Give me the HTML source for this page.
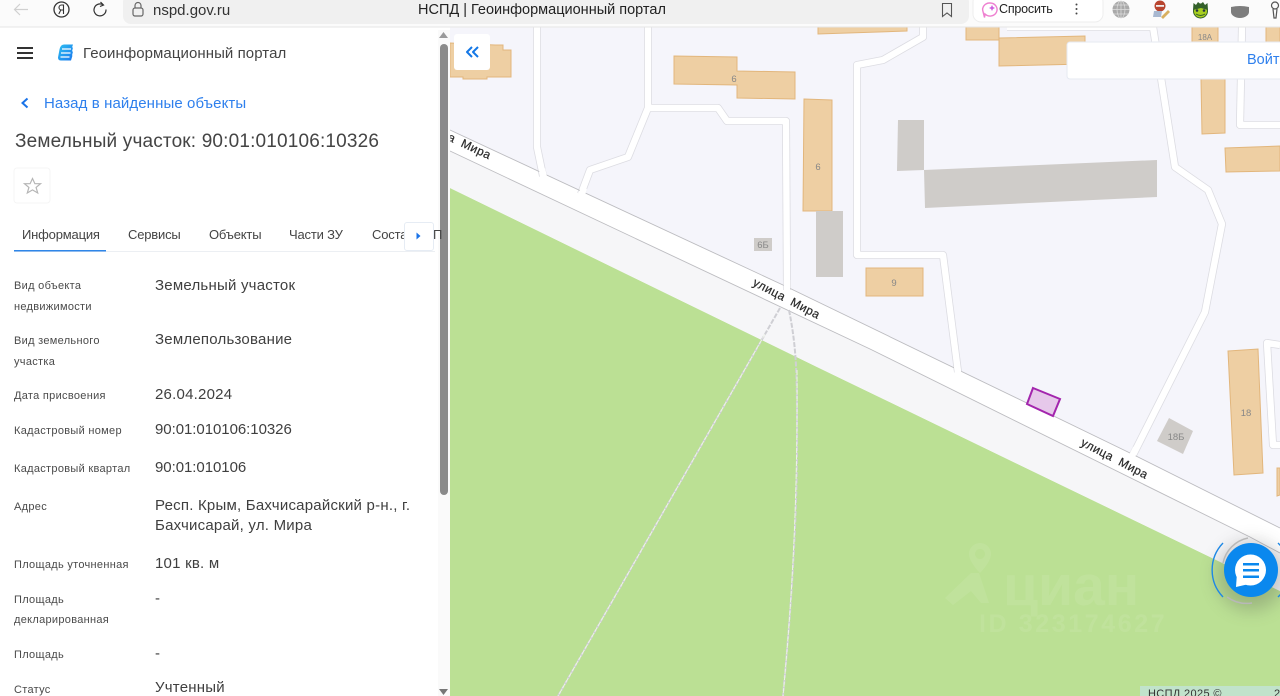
<!DOCTYPE html>
<html lang="ru"><head><meta charset="utf-8"><title>НСПД | Геоинформационный портал</title>
<style>
html,body{margin:0;padding:0;width:1280px;height:696px;overflow:hidden;background:#f5f5fb;font-family:"Liberation Sans","Noto Sans CJK SC",sans-serif}
.t{position:absolute;white-space:nowrap;line-height:1}
.l{font-size:11px;color:#4a4a4a;left:14px;letter-spacing:.3px}
.v{font-size:15px;color:#3f3f3f;left:155px;letter-spacing:.22px}
.n{letter-spacing:-.05px}
.tab{font-size:13px;color:#444;top:227.500px;letter-spacing:-.18px}
svg{position:absolute;left:0;top:0}
</style></head><body>
<svg width="1280" height="696" viewBox="0 0 1280 696" font-family="'Liberation Sans',sans-serif">
<defs>
<filter id="b" x="-50%" y="-50%" width="200%" height="200%"><feGaussianBlur stdDeviation="9"/></filter>
<linearGradient id="g" x1="0" y1="0" x2="1" y2="1"><stop offset="0" stop-color="#2fc0f0"/><stop offset="1" stop-color="#1a78ee"/></linearGradient>
</defs>
<rect width="1280" height="696" fill="#f5f5fb"/>
<polygon points="450,188 817,367 1210,557 1280,591 1280,696 450,696" fill="#bbe094"/>
<polygon points="450,151 870,349 1250,537 1280,553 1280,591 1210,557 817,367 450,188" fill="#f6f6f8"/>
<polygon points="450,130 783,285 1130,453 1280,528 1280,553 1250,537 870,349 450,151" fill="#fff"/>
<g fill="none" stroke-linejoin="round">
<g stroke="#dcdce2" stroke-width="8">
<path d="M537,27V147L543,176M648,27V108L628,157L590,170L581,194M648,108H718L727,121H786L787,290M923,27V37L883,60L857,65V255H943L958,372M1153,27L1175,167L1208,190L1222,224L1205,312L1133,455M1242,27L1240,125H1280M1280,345L1267,343L1273,445H1280M1007,27H1153"/>
</g>
<g stroke="#fff" stroke-width="6.400">
<path d="M537,27V147L543,176M648,27V108L628,157L590,170L581,194M648,108H718L727,121H786L787,290M923,27V37L883,60L857,65V255H943L958,372M1153,27L1175,167L1208,190L1222,224L1205,312L1133,455M1242,27L1240,125H1280M1280,345L1267,343L1273,445H1280M1007,27H1153"/>
</g>
</g>
<polyline points="450,130 783,285 1130,453 1280,528" fill="none" stroke="#bcbcc0" stroke-width=".9"/>
<polyline points="450,151 870,349 1250,537 1280,553" fill="none" stroke="#bcbcc0" stroke-width=".9"/>
<path d="M542,169L544,178M584,188L581,197M787,280V293M957,366L959,378M1136,448L1131,458" stroke="#fff" stroke-width="6.400" fill="none"/>
<g fill="#eecfa3" stroke="#e2b67c" stroke-width="1">
<polygon points="450,43 495,45 503,45 503,50 511,50 511,77 487,77 487,79 463,79 463,77 450,77"/>
<polygon points="674,56 737,57 737,71 795,72 795,99 737,98 737,85 674,84"/>
<polygon points="804,99 832,100 832,211 803,211"/>
<polygon points="866,268 923,268 923,296 866,296"/>
<polygon points="818,27 907,27 907,31 818,34"/>
<polygon points="966,27 999,27 999,40 966,40"/>
<polygon points="999,38 1085,36 1085,64 999,66"/>
<polygon points="1192,27 1218,27 1218,42 1192,42"/>
<polygon points="1201,79 1225,79 1225,133 1202,134"/>
<polygon points="1225,148 1280,146 1280,171 1226,172"/>
<polygon points="1266,27 1280,27 1280,42 1266,42"/>
<polygon points="1228,351 1258,349 1263,473 1234,475"/>
<polygon points="1277,468 1280,468 1280,495 1277,496"/>
</g>
<g fill="#cfccc9">
<polygon points="816,211 843,211 843,277 816,277"/>
<polygon points="898,120 924,120 924,170 897,171"/>
<polygon points="924,170 1157,160 1157,197 925,208"/>
<polygon points="1169,418 1193,431 1183,454 1157,441"/>
<polygon points="754,238 772,238 772,251 754,251"/>
</g>
<polygon points="1033,388 1060,399 1053,416 1027,404" fill="#e6c8ea" stroke="#a325ad" stroke-width="2"/>
<g font-size="9.500" fill="#888" text-anchor="middle">
<text x="734" y="82">6</text><text x="818" y="170">6</text><text x="894" y="286">9</text><text x="763" y="248">6Б</text><text x="1205" y="40" font-size="8">18А</text><text x="1246" y="416">18</text><text x="1176" y="440">18Б</text>
</g>
<path d="M780,308L558,696" stroke="#cfcfd4" stroke-width="2" fill="none" stroke-dasharray="5 1.500"/>
<path d="M789,310C796,345 797,370 797,420C798,520 790,620 783,696" stroke="#cfcfd4" stroke-width="2" fill="none" stroke-dasharray="5 1.500"/>
<path d="M765,334L558,696" stroke="#eef2ea" stroke-width="1" fill="none" stroke-dasharray="5 1.500"/>
<path d="M797,370C798,520 790,620 783,696" stroke="#eef2ea" stroke-width="1" fill="none" stroke-dasharray="5 1.500"/>
<g font-size="12" fill="#2a2a2a" stroke="#2a2a2a" stroke-width=".2" letter-spacing=".38">
<text transform="translate(752,285) rotate(27.500)" xml:space="preserve">улица  Мира</text>
<text transform="translate(1080,445) rotate(27.500)" xml:space="preserve">улица  Мира</text>
<text transform="translate(447,140) rotate(25)" xml:space="preserve">а  Мира</text>
</g>
<g fill="#fff" opacity=".075">
<path fill-rule="evenodd" d="M980,543a11,11 0 0 1 11,11c0,8-11,19-11,19s-11-11-11-19a11,11 0 0 1 11-11zm0,6a5,5 0 1 0 .01,0z"/>
<path d="M971,573h8l10,30h-8l-10-12l-18,14l-8-7z"/>
<text x="1003" y="605" font-size="57" font-weight="700">циан</text>
<text x="979" y="632" font-size="25" font-weight="700" letter-spacing="2.600">ID 323174627</text>
</g>
<circle cx="1251" cy="576" r="34" fill="#444" opacity=".28" filter="url(#b)"/>
<path d="M1223,543A39,39 0 0 0 1223,597M1278,543L1281,546M1278,597L1281,594" fill="none" stroke="#1e88e5" stroke-width="1.400"/>
<path d="M1223,563A32,32 0 0 1 1248,538M1227,597A34,34 0 0 0 1252,603" fill="none" stroke="#b8b8b8" stroke-width="1.500"/>
<circle cx="1251" cy="570" r="27" fill="#0a88ee"/>
<circle cx="1250.500" cy="570" r="15.500" fill="#fff"/>
<path d="M1236,587l1-14l12,11z" fill="#fff"/>
<g fill="#0a88ee"><rect x="1243" y="563" width="16" height="2.500"/><rect x="1243" y="569" width="16" height="2.500"/><rect x="1243" y="575.500" width="16" height="2.500"/></g>
<rect x="1140" y="686" width="140" height="10" fill="#c1e3cb"/>
<text x="1148" y="697" font-size="11" fill="#333" letter-spacing=".35">НСПД 2025 ©</text>
<text x="1274" y="697" font-size="11" fill="#333">2</text>
<rect x="1067" y="42" width="220" height="37" rx="3" fill="#fff" stroke="#e6eaf2"/>
<text x="1247" y="64" font-size="14.500" fill="#2f80ed">Войт</text>
<rect x="454" y="34" width="36" height="36" rx="3" fill="#fff"/>
<path d="M472,47l-5,5l5,5M478,47l-5,5l5,5" fill="none" stroke="#1477e6" stroke-width="2" stroke-linejoin="round"/>
<rect x="0" y="27" width="450" height="669" fill="#fff"/>
<rect x="438" y="30" width="12" height="666" fill="#fafafa"/>
<rect x="440" y="44" width="8" height="451" rx="4" fill="#8a8a8a"/>
<polygon points="443.500,32 439,38 448,38" fill="#9a9a9a"/>
<polygon points="443.500,695 439,689 448,689" fill="#777"/>
<rect x="0" y="0" width="1280" height="27" fill="#fbfbfb"/>
<rect x="0" y="26.500" width="1280" height="1" fill="#e6e6e6"/>
<rect x="123" y="-6" width="846" height="30" rx="8" fill="#f0f0f0"/>
<rect x="973" y="-6" width="130" height="28" rx="8" fill="#fff" stroke="#eee"/>
<path d="M28,9.500H15M20,4l-5.500,5.500l5.500,5.500" fill="none" stroke="#d0d0d0" stroke-width="1.200"/>
<circle cx="61.500" cy="9.500" r="7.500" fill="none" stroke="#333" stroke-width="1.300"/>
<path d="M63.500,14V5h-2a2.400,2.400 0 0 0 0,5h2M60.800,10l-2,4" fill="none" stroke="#333" stroke-width="1.100"/>
<path d="M106,9.500a6,6 0 1 1-2.500-4.500M100.500,2l3,3-3.500,1.500" fill="none" stroke="#333" stroke-width="1.200"/>
<rect x="133" y="8" width="10" height="8" rx="2" fill="none" stroke="#666" stroke-width="1.200"/>
<path d="M135,8V5.500a3,3 0 0 1 6,0V8" fill="none" stroke="#666" stroke-width="1.200"/>
<path d="M942.500,3.500h9v13l-4.500-3.500l-4.500,3.500z" fill="none" stroke="#555" stroke-width="1.100"/>
<path d="M990,3a7,6.500 0 1 1-5,11l-.5,3.500l-1.500-6a7,6.500 0 0 1 7-8.500z" fill="none" stroke="#ee80d0" stroke-width="1.400"/>
<path d="M992,5l1,2 2,1-2,1-1,2-1-2-2-1 2-1z" fill="#d060e0"/>
<g fill="#444"><circle cx="1076.500" cy="4.500" r="1"/><circle cx="1076.500" cy="9" r="1"/><circle cx="1076.500" cy="13.500" r="1"/></g>
<circle cx="1121" cy="9.500" r="8.500" fill="#a9a9a9"/>
<path d="M1112.500,9.500h17M1121,1v17M1113.500,5h15M1113.500,14h15" stroke="#ddd" stroke-width=".7" fill="none"/>
<ellipse cx="1121" cy="9.500" rx="4" ry="8.500" fill="none" stroke="#ddd" stroke-width=".7"/>
<circle cx="1160" cy="6" r="5.500" fill="#b8442f"/><rect x="1156" y="5" width="8" height="1.800" fill="#eee"/>
<path d="M1153,17l1-6h8l-1,6z" fill="#a8b8d0"/><path d="M1161,17l7-7 2,2-7,7z" fill="#d8b060"/>
<circle cx="1200.500" cy="11" r="7" fill="#a8cf20" stroke="#33602a" stroke-width="1"/>
<path d="M1193,10l.5-7 2.500,2 2-3 2.500,2 2.500-2 2,3 2.500-2 .5,7-7-2z" fill="#33602a"/>
<path d="M1196,14q4.500,3 9,0" stroke="#33602a" fill="none"/><circle cx="1197" cy="10.500" r="1.300" fill="#234"/><circle cx="1204" cy="10.500" r="1.300" fill="#234"/>
<path d="M1231,7q9,-2 18,0v5c0,3-4,6-9,6s-9-3-9-6z" fill="#7d7d7d"/>
<circle cx="1275" cy="5.500" r="3.500" fill="none" stroke="#555" stroke-width="1.200"/><path d="M1273,9l1,9h2l1-9" fill="none" stroke="#555" stroke-width="1.200"/>
<rect x="17" y="47" width="16" height="2" fill="#333"/><rect x="17" y="52" width="16" height="2" fill="#333"/><rect x="17" y="57" width="16" height="2" fill="#333"/>
<path d="M63,44.500h10l-1,3h1l-1,4h1l-1,4h.5l-1.500,5h-10q-3,0-3-3l1.500-8q1-5 4.500-5z" fill="url(#g)"/>
<path d="M62,49h9M61,53h9.500M60.500,57h9" stroke="#fff" stroke-width="1.200" fill="none"/>
<path d="M27.500,98.500l-5,4.500l5,4.500" fill="none" stroke="#1a73e8" stroke-width="2"/>
<rect x="14" y="168" width="36" height="35" rx="3" fill="#fff" stroke="#f5f5f5"/>
<path d="M32.500,178.500l2.400,5.200h5.600l-4.400,3.700l1.600,5.600l-5.200-3.100l-5.200,3.100l1.600-5.600l-4.400-3.700h5.600z" fill="none" stroke="#b5b5b5" stroke-width="1.200"/>
<rect x="14" y="251" width="421" height="1" fill="#eceff3"/>
<rect x="14" y="250" width="92" height="1.500" fill="#2f86e8"/>
</svg>
<div class="t" style="left:153px;top:3px;font-size:15px;color:#333">nspd.gov.ru</div>
<div class="t" style="left:418px;top:3px;font-size:14.500px;color:#222">НСПД | Геоинформационный портал</div>
<div class="t" style="left:999px;top:3px;font-size:12.500px;color:#222;letter-spacing:-.2px">Спросить</div>
<div class="t" style="left:83px;top:46px;font-size:15px;color:#444;letter-spacing:.07px">Геоинформационный портал</div>
<div class="t" style="left:44px;top:96px;font-size:15px;color:#2f80ed;letter-spacing:.1px">Назад в найденные объекты</div>
<div class="t" style="left:15px;top:132px;font-size:19px;color:#444;letter-spacing:.17px">Земельный участок: 90:01:010106:10326</div>
<div class="t tab" style="left:22px">Информация</div>
<div class="t tab" style="left:128px">Сервисы</div>
<div class="t tab" style="left:209px">Объекты</div>
<div class="t tab" style="left:289px">Части ЗУ</div>
<div class="t tab" style="left:372px">Состав</div>
<div class="t tab" style="left:433px">П</div>
<div style="position:absolute;left:404px;top:222px;width:28px;height:27px;background:#fff;border:1px solid #e6ecf4;border-radius:3px"></div>
<svg style="left:414px;top:231px" width="10" height="10"><path d="M2.500,1.500l4,3.500l-4,3.500z" fill="#1a73e8"/></svg>
<div class="t l" style="top:281px">Вид объекта</div><div class="t l" style="top:302px">недвижимости</div>
<div class="t v" style="top:278px">Земельный участок</div>
<div class="t l" style="top:336px">Вид земельного</div><div class="t l" style="top:357px">участка</div>
<div class="t v" style="top:332px">Землепользование</div>
<div class="t l" style="top:391px">Дата присвоения</div><div class="t v" style="top:387px">26.04.2024</div>
<div class="t l" style="top:426px">Кадастровый номер</div><div class="t v n" style="top:422px">90:01:010106:10326</div>
<div class="t l" style="top:464px">Кадастровый квартал</div><div class="t v n" style="top:460px">90:01:010106</div>
<div class="t l" style="top:502px">Адрес</div><div class="t v" style="top:498px">Респ. Крым, Бахчисарайский р-н., г.</div><div class="t v" style="top:518px">Бахчисарай, ул. Мира</div>
<div class="t l" style="top:560px">Площадь уточненная</div><div class="t v" style="top:556px">101 кв. м</div>
<div class="t l" style="top:595px">Площадь</div><div class="t l" style="top:615px">декларированная</div><div class="t v" style="top:591px">-</div>
<div class="t l" style="top:650px">Площадь</div><div class="t v" style="top:646px">-</div>
<div class="t l" style="top:685px">Статус</div><div class="t v" style="top:680px">Учтенный</div>
</body></html>
